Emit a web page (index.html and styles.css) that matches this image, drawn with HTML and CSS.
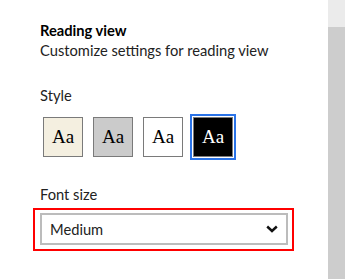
FILE: index.html
```html
<!DOCTYPE html>
<html>
<head>
<meta charset="utf-8">
<link rel="stylesheet" href="styles.css">
</head>
<body>
<div class="page">
  <main class="panel">
    <h2 class="title">Reading view</h2>
    <p class="desc">Customize settings for reading view</p>
    <div class="label style-label">Style</div>
    <div class="swatches">
      <div class="swatch sepia">Aa</div>
      <div class="swatch medium">Aa</div>
      <div class="swatch light">Aa</div>
      <div class="swatch dark selected">Aa</div>
    </div>
    <div class="label size-label">Font size</div>
    <div class="highlight">
      <div class="select">
        <span class="select-text">Medium</span>
        <svg class="chevron" width="12" height="8" viewBox="0 0 12 8"><path d="M1.2 1.5 L6 6 L10.8 1.5" fill="none" stroke="#111" stroke-width="2.4"/></svg>
      </div>
    </div>
  </main>
  <div class="scrollbar">
    <div class="sb-top"></div>
    <div class="sb-thumb"></div>
  </div>
</div>
</body>
</html>
```
FILE: styles.css
```css
html, body {
  margin: 0;
  padding: 0;
  background: #fff;
}
.page {
  display: flex;
  width: 345px;
  height: 279px;
  font-family: Lato, "Open Sans", sans-serif;
  color: #222;
}
.panel {
  flex: 1;
  padding: 20px 0 0 40px;
  display: flex;
  flex-direction: column;
  align-items: flex-start;
}
.title {
  margin: 0;
  font-size: 14.7px;
  line-height: 20px;
  font-weight: 700;
  color: #000;
}
.desc {
  margin: 0;
  font-size: 14.7px;
  line-height: 20px;
  color: #222;
}
.label {
  font-size: 14.7px;
  line-height: 20px;
  color: #222;
}
.style-label {
  margin-top: 25px;
}
.swatches {
  display: flex;
  gap: 10px;
  margin-top: 12px;
  margin-left: 3px;
}
.swatch {
  box-sizing: border-box;
  width: 40px;
  height: 40px;
  border: 1px solid #7a7a7a;
  display: flex;
  align-items: center;
  justify-content: center;
  font-family: "Liberation Serif", "DejaVu Serif", serif;
  font-size: 19px;
  color: #000;
}
.sepia { background: #f4efe0; }
.medium { background: #cbcbcb; }
.light { background: #fff; }
.dark { background: #000; color: #fff; }
.selected {
  outline: 2px solid #2a73e8;
  outline-offset: 1px;
}
.size-label {
  margin-top: 27px;
}
.highlight {
  margin-top: 4px;
  margin-left: -7px;
  border: 2px solid #f00;
  padding: 3px 4px 4px 5px;
}
.select {
  box-sizing: border-box;
  width: 248px;
  height: 32px;
  border: 2px solid #bcbcbc;
  display: flex;
  align-items: center;
  justify-content: space-between;
  padding: 0 8px 0 8px;
}
.select-text {
  font-size: 14.7px;
  line-height: 20px;
  color: #222;
}
.chevron {
  display: block;
}
.scrollbar {
  width: 17px;
  display: flex;
  flex-direction: column;
}
.sb-top {
  height: 27px;
  background: #ebebeb;
}
.sb-thumb {
  flex: 1;
  background: #cdcdcd;
}
```
